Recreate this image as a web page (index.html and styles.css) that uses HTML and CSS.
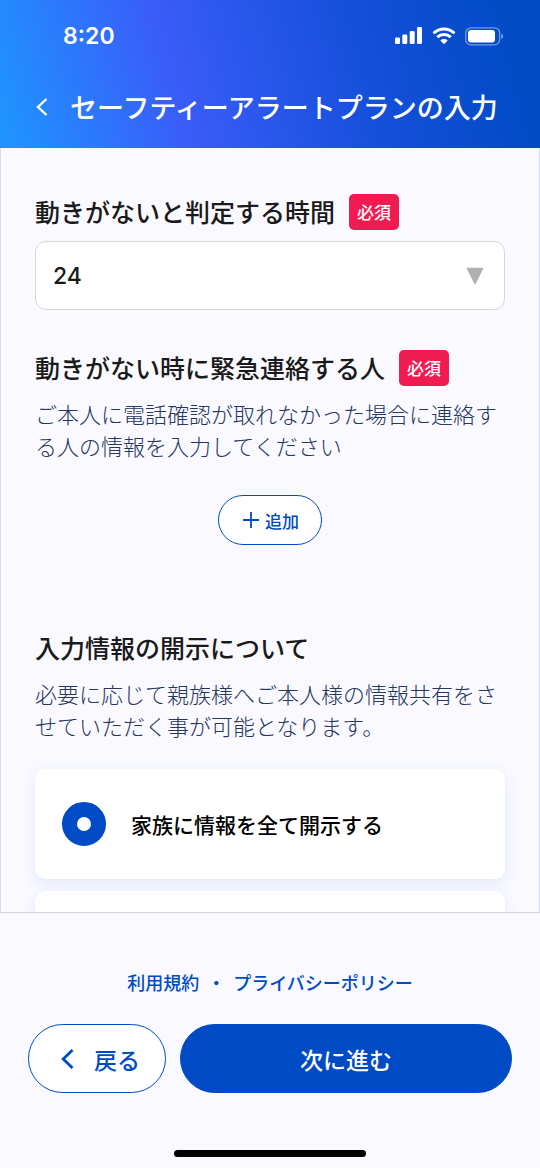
FILE: index.html
```html
<!DOCTYPE html>
<html lang="ja">
<head>
<meta charset="utf-8">
<meta name="viewport" content="width=device-width, initial-scale=1">
<title>セーフティーアラートプランの入力</title>
<link rel="stylesheet" href="styles.css">
</head>
<body>
<div class="app">
  <header class="header">
    <div class="status">
      <span class="status-time">8:20</span>
      <div class="status-icons">
        <svg width="28" height="18" viewBox="0 0 28 18" fill="#fff" aria-hidden="true">
          <rect x="0" y="10.500" width="5" height="6.500" rx="1.300"/>
          <rect x="7.300" y="7.500" width="5" height="9.500" rx="1.300"/>
          <rect x="14.700" y="4" width="5" height="13" rx="1.300"/>
          <rect x="22" y="0" width="5" height="17" rx="1.300"/>
        </svg>
        <svg width="24" height="18" viewBox="0 0 24 18" aria-hidden="true">
          <g fill="none" stroke="#fff" stroke-width="3">
            <path d="M1.500 6.200a15 15 0 0 1 21 0"/>
            <path d="M5.300 10.200a9.700 9.700 0 0 1 13.400 0"/>
          </g>
          <path d="M12 17.300 8.300 13.500a5.400 5.400 0 0 1 7.400 0z" fill="#fff"/>
        </svg>
        <svg width="39" height="19" viewBox="0 0 39 19" aria-hidden="true">
          <rect x=".8" y=".8" width="33.800" height="17" rx="5" fill="none" stroke="#fff" stroke-opacity=".45" stroke-width="1.300"/>
          <rect x="3" y="3" width="27" height="12.600" rx="3" fill="#fff"/>
          <path d="M36.300 6.500c2.400.9 2.400 4.800 0 5.700z" fill="#fff" fill-opacity=".5"/>
        </svg>
      </div>
    </div>
    <div class="titlebar">
      <button class="back-icon" type="button" aria-label="戻る">
        <svg width="12" height="18" viewBox="0 0 12 18" fill="none" stroke="#fff" stroke-width="2.400" aria-hidden="true"><path d="M10.500 1 2 9l8.500 8"/></svg>
      </button>
      <h1 class="title">セーフティーアラートプランの入力</h1>
    </div>
  </header>

  <main class="content">
    <section class="section">
      <div class="heading-row">
        <label class="heading" for="hours">動きがないと判定する時間</label>
        <span class="badge">必須</span>
      </div>
      <div class="select-box">
        <select class="select" id="hours"><option>24</option></select>
        <svg class="select-arrow" width="18" height="18" viewBox="0 0 18 18" aria-hidden="true"><path d="M1.500 1.500h15L9 16.500z" fill="#b0b0b0" stroke="#b0b0b0" stroke-width="1.500" stroke-linejoin="round"/></svg>
      </div>
    </section>

    <section class="section contact">
      <div class="heading-row">
        <h2 class="heading">動きがない時に緊急連絡する人</h2>
        <span class="badge">必須</span>
      </div>
      <p class="description">ご本人に電話確認が取れなかった場合に連絡する人の情報を入力してください</p>
      <button class="add" type="button">
        <svg width="16" height="16" viewBox="0 0 16 16" fill="none" stroke="#004bc5" stroke-width="1.800" aria-hidden="true"><path d="M8 0v16M0 8h16"/></svg>
        追加
      </button>
    </section>

    <section class="section disclosure">
      <div class="heading-row">
        <h2 class="heading">入力情報の開示について</h2>
      </div>
      <p class="description">必要に応じて親族様へご本人様の情報共有をさせていただく事が可能となります。</p>
      <div class="options">
        <label class="card">
          <input class="radio" type="radio" name="disclosure" checked>
          <span>家族に情報を全て開示する</span>
        </label>
        <div class="card"></div>
      </div>
    </section>
  </main>

  <footer class="footer">
    <nav class="links">
      <a href="#terms">利用規約</a>
      <span>・</span>
      <a href="#privacy">プライバシーポリシー</a>
    </nav>
    <div class="actions">
      <button class="btn btn-back" type="button">
        <svg width="13" height="20" viewBox="0 0 13 20" fill="none" stroke="#004bc5" stroke-width="2.800" aria-hidden="true"><path d="M11.500 1 2.200 10l9.300 9"/></svg>
        戻る
      </button>
      <button class="btn btn-next" type="button">次に進む</button>
    </div>
    <div class="home-indicator"></div>
  </footer>
</div>
</body>
</html>
```

FILE: styles.css
```css
* {
  box-sizing: border-box;
}

body {
  margin: 0;
  background: #f9f9ff;
  color: #1a1a1a;
  font-family: "Noto Sans CJK JP", sans-serif;
}

button,
select {
  font-family: inherit;
  cursor: pointer;
}

h1,
h2,
p {
  margin: 0;
}

svg {
  display: block;
  flex: none;
}

.app {
  display: flex;
  flex-direction: column;
  height: 100vh;
}

.header {
  flex: none;
  padding: 20px 36px 21px;
  background: linear-gradient(75deg, #1e96ff 0%, #3a5cf8 33%, #1550da 66%, #004bc4 95%);
  color: #fff;
}

.status {
  display: flex;
  align-items: center;
  justify-content: space-between;
  height: 32px;
  padding-left: 27px;
}

.status-time {
  font: 600 23px/32px Inter, sans-serif;
}

.status-icons {
  display: flex;
  align-items: center;
  gap: 9px;
}

.titlebar {
  display: flex;
  align-items: center;
  gap: 22px;
  margin-top: 35px;
}

.back-icon {
  padding: 0;
  border: 0;
  background: none;
}

.title {
  font-size: 27px;
  font-weight: 500;
  line-height: 40px;
  white-space: nowrap;
}

.content {
  flex: 1;
  min-height: 0;
  padding: 46px 34px 0;
  border: solid #cfdbfa;
  border-width: 0 1px;
  overflow-y: auto;
  scrollbar-width: none;
}

.heading-row {
  display: flex;
  align-items: flex-start;
  gap: 14px;
  height: 36px;
  margin-bottom: 11px;
}

.heading {
  font-size: 25px;
  font-weight: 500;
  line-height: 34px;
}

.badge {
  padding: 0 8px;
  border-radius: 5px;
  background: #f01b50;
  color: #fff;
  font-size: 17px;
  font-weight: 500;
  line-height: 36px;
}

.select-box {
  display: grid;
  align-items: center;
}

.select {
  grid-area: 1 / 1;
  width: 100%;
  height: 69px;
  padding: 0 17px;
  border: 1px solid #d6d6d6;
  border-radius: 11px;
  background: #fff;
  color: #1a1a1a;
  font: 500 23px Inter, sans-serif;
  appearance: none;
}

.select-arrow {
  grid-area: 1 / 1;
  justify-self: end;
  margin-right: 21px;
  pointer-events: none;
}

.contact {
  margin-top: 40px;
}

.description {
  color: #26365f;
  font-size: 22px;
  font-weight: 300;
  line-height: 32px;
}

.add {
  display: flex;
  align-items: center;
  gap: 6px;
  height: 50px;
  margin: 34px auto 0;
  padding: 0 22px 0 24px;
  border: 1px solid #004bc5;
  border-radius: 25px;
  background: #fff;
  color: #004bc5;
  font-size: 17px;
  font-weight: 500;
}

.disclosure {
  margin-top: 85px;
}

.options {
  display: grid;
  gap: 12px;
  margin-top: 28px;
}

.card {
  display: flex;
  align-items: center;
  gap: 25px;
  min-height: 110px;
  padding: 0 27px;
  border-radius: 11px;
  background: #fff;
  box-shadow: 0 4px 14px #e2e9fb;
  color: #000;
  font-size: 21px;
  font-weight: 500;
}

.radio {
  flex: none;
  width: 44px;
  height: 44px;
  margin: 0;
  border: 15px solid #004bc5;
  border-radius: 50%;
  background: #fff;
  appearance: none;
}

.footer {
  flex: none;
  padding: 56px 28px 11px;
  border-top: 1px solid #d6d6da;
}

.links {
  display: flex;
  justify-content: center;
  gap: 8px;
  color: #004bc5;
  font-size: 18px;
  font-weight: 500;
  line-height: 26px;
}

.links a {
  color: inherit;
  text-decoration: none;
}

.actions {
  display: flex;
  gap: 14px;
  margin-top: 29px;
}

.btn {
  display: flex;
  align-items: center;
  justify-content: center;
  gap: 20px;
  height: 69px;
  border: 1px solid #004bc5;
  border-radius: 35px;
  font-size: 23px;
  font-weight: 500;
}

.btn-back {
  flex: none;
  padding: 0 25px 0 32px;
  background: #fff;
  color: #004bc5;
}

.btn-next {
  flex: 1;
  background: #004bc5;
  color: #fff;
}

.home-indicator {
  width: 192px;
  height: 7px;
  margin: 57px auto 0;
  border-radius: 4px;
  background: #000;
}
```
